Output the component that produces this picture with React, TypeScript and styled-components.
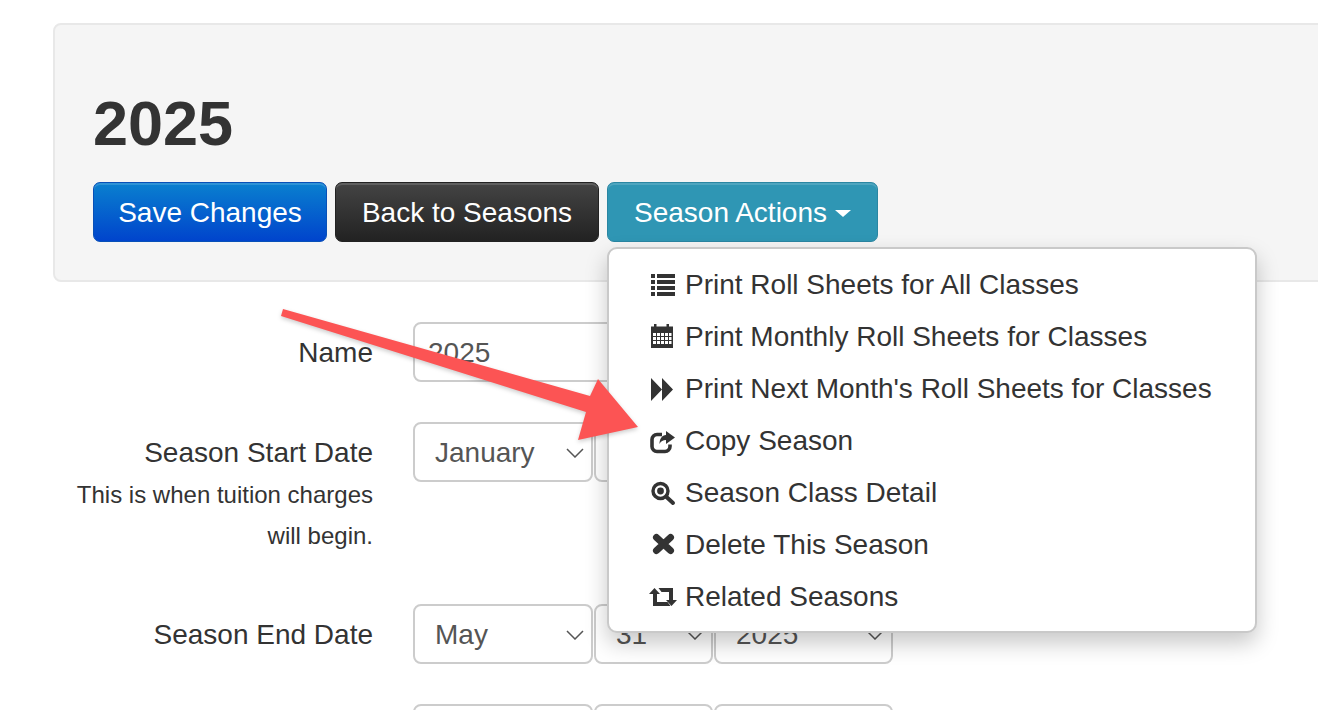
import React, { FC } from "react";
import styled, { createGlobalStyle } from "styled-components";

const GlobalStyle = createGlobalStyle`
  html, body {
    margin: 0;
    padding: 0;
    background: #fff;
    overflow: hidden;
  }
`;

const Page = styled.div`
  position: relative;
  width: 1318px;
  height: 710px;
  overflow: hidden;
  box-sizing: border-box;
  padding: 23px 0 0 53px;
  font-family: "Liberation Sans", Arial, sans-serif;
  color: #333;
`;

const HeroPanel = styled.div`
  box-sizing: border-box;
  width: 1320px;
  height: 259px;
  padding: 71px 38px 38px;
  background: #f5f5f5;
  border: 2px solid #e8e8e8;
  border-radius: 8px;
`;

const Title = styled.h1`
  margin: 0 0 32px;
  font-size: 63px;
  line-height: 54px;
  font-weight: 700;
  color: #333;
`;

const ButtonRow = styled.div`
  display: flex;
  gap: 8px;
`;

const ButtonGroup = styled.div`
  position: relative;
`;

const ActionButton = styled.button<{ $from: string; $to: string; $edge: string; $width: number }>`
  box-sizing: border-box;
  display: flex;
  align-items: center;
  justify-content: center;
  gap: 8px;
  width: ${(p) => p.$width}px;
  height: 60px;
  padding: 2px 0 0;
  font-family: inherit;
  font-size: 28px;
  color: #fff;
  background: linear-gradient(${(p) => p.$from}, ${(p) => p.$to});
  border: 1px solid ${(p) => p.$edge};
  border-radius: 7px;
  box-shadow: inset 0 2px 0 rgba(255, 255, 255, 0.15);
`;

const Caret = styled.span`
  width: 0;
  height: 0;
  border-left: 8px solid transparent;
  border-right: 8px solid transparent;
  border-top: 7px solid #fff;
`;

const Menu = styled.ul`
  position: absolute;
  z-index: 2;
  top: 65px;
  left: 0;
  box-sizing: border-box;
  width: 650px;
  height: 386px;
  margin: 0;
  padding: 10px 0 0 41px;
  list-style: none;
  background: #fff;
  border: 2px solid #c9c9c9;
  border-radius: 10px;
  box-shadow: 0 10px 22px rgba(0, 0, 0, 0.22);
`;

const MenuItem = styled.li`
  display: flex;
  align-items: center;
  height: 52px;
  font-size: 28px;
  color: #333;
  white-space: nowrap;
`;

const IconSlot = styled.svg`
  flex: none;
  width: 26px;
  height: 26px;
  margin-right: 9px;
  overflow: visible;
  color: #333;
`;

const Form = styled.div`
  display: flex;
  flex-direction: column;
  margin-top: 40px;
`;

const FormRow = styled.div<{ $height: number }>`
  display: flex;
  gap: 40px;
  height: ${(p) => p.$height}px;
`;

const LabelColumn = styled.div`
  width: 320px;
  text-align: right;
`;

const Label = styled.div`
  height: 60px;
  line-height: 62px;
  font-size: 28px;
  color: #333;
`;

const Hint = styled.div`
  margin-top: -8px;
  font-size: 24px;
  line-height: 41px;
  color: #333;
`;

const NameInput = styled.input`
  box-sizing: border-box;
  width: 480px;
  height: 60px;
  padding: 2px 13px 0;
  font-family: inherit;
  font-size: 28px;
  color: #555;
  background: #fff;
  border: 2px solid #ccc;
  border-radius: 8px;
  outline: none;
`;

const SelectRow = styled.div`
  display: flex;
  gap: 1px;
`;

const SelectBox = styled.div<{ $width: number }>`
  box-sizing: border-box;
  display: flex;
  align-items: center;
  justify-content: space-between;
  width: ${(p) => p.$width}px;
  height: 60px;
  padding: 2px 7px 0 20px;
  font-size: 28px;
  color: #555;
  background: #fff;
  border: 2px solid #ccc;
  border-radius: 8px;
`;

const Chevron = styled.svg`
  flex: none;
  width: 18px;
  height: 10px;
`;

const Arrow = styled.svg`
  position: absolute;
  z-index: 3;
  left: 0;
  top: 0;
  width: 1318px;
  height: 710px;
  pointer-events: none;
  filter: drop-shadow(0 2px 2px rgba(0, 0, 0, 0.2));
`;

const ListIcon: FC = () => (
  <IconSlot viewBox="0 0 26 26" fill="currentColor">
    <path d="M1 2h4v4H1zM7 2h18v4H7zM1 8h4v4H1zM7 8h18v4H7zM1 14h4v4H1zM7 14h18v4H7zM1 20h4v4H1zM7 20h18v4H7z" />
  </IconSlot>
);

const CalendarIcon: FC = () => (
  <IconSlot viewBox="0 0 26 26" fill="currentColor">
    <path
      fillRule="evenodd"
      d="M4 0h2.500v2.500h10V0H19v2.500h4V24H1V2.500h3zM3 9v3h3V9zM7 9v3h3V9zM11 9v3h3V9zM15 9v3h3V9zM19 9v3h2.500V9zM3 13v3h3v-3zM7 13v3h3v-3zM11 13v3h3v-3zM15 13v3h3v-3zM19 13v3h2.500v-3zM3 17v3h3v-3zM7 17v3h3v-3zM11 17v3h3v-3zM15 17v3h3v-3zM19 17v3h2.500v-3z"
    />
  </IconSlot>
);

const ForwardIcon: FC = () => (
  <IconSlot viewBox="0 0 26 26" fill="currentColor">
    <path d="M1 2l11 11.500L1 25zM12 2l11 11.500L12 25z" />
  </IconSlot>
);

const ShareIcon: FC = () => (
  <IconSlot viewBox="0 0 26 26">
    <path d="M12 6.500H7A5 5 0 0 0 2 11.500v7a5 5 0 0 0 5 5h8a5 5 0 0 0 5-5v-2" fill="none" stroke="currentColor" strokeWidth="3.600" />
    <path d="M16 3l9 6.500-9 6.500v-4c-3 0-5 1-6.500 4C9.500 11 12 7 16 7z" fill="currentColor" />
  </IconSlot>
);

const ZoomIcon: FC = () => (
  <IconSlot viewBox="0 0 26 26">
    <circle cx="10.500" cy="11" r="7.500" fill="none" stroke="currentColor" strokeWidth="3.400" />
    <circle cx="10.500" cy="11" r="3.400" fill="currentColor" />
    <path d="M16.500 17L23 23" stroke="currentColor" strokeWidth="4" strokeLinecap="round" />
  </IconSlot>
);

const RemoveIcon: FC = () => (
  <IconSlot viewBox="0 0 26 26">
    <path d="M6.500 5.500l14 13M20.500 5.500l-14 13" stroke="currentColor" strokeWidth="7" strokeLinecap="round" />
  </IconSlot>
);

const RetweetIcon: FC = () => (
  <IconSlot viewBox="0 0 26 26" fill="currentColor">
    <path d="M-1 10l5.500-6L10 10H7v8h10.500l3 4H3V10zM8.500 4H23v12h4l-5.500 6L16 16h3V8H11.500z" />
  </IconSlot>
);

const ChevronDown: FC = () => (
  <Chevron viewBox="0 0 18 10">
    <path d="M1 1l8 8 8-8" fill="none" stroke="#555" strokeWidth="1.500" />
  </Chevron>
);

const Select: FC<{ value?: string; width: number }> = ({ value, width }) => (
  <SelectBox $width={width}>
    {value}
    <ChevronDown />
  </SelectBox>
);

const menuItems = [
  { icon: <ListIcon />, label: "Print Roll Sheets for All Classes" },
  { icon: <CalendarIcon />, label: "Print Monthly Roll Sheets for Classes" },
  { icon: <ForwardIcon />, label: "Print Next Month's Roll Sheets for Classes" },
  { icon: <ShareIcon />, label: "Copy Season" },
  { icon: <ZoomIcon />, label: "Season Class Detail" },
  { icon: <RemoveIcon />, label: "Delete This Season" },
  { icon: <RetweetIcon />, label: "Related Seasons" },
];

const App: FC = () => (
  <Page>
    <GlobalStyle />
    <HeroPanel>
      <Title>2025</Title>
      <ButtonRow>
        <ActionButton $from="#0a80cf" $to="#0044cc" $edge="#0850b8" $width={234}>
          Save Changes
        </ActionButton>
        <ActionButton $from="#444444" $to="#222222" $edge="#222222" $width={264}>
          Back to Seasons
        </ActionButton>
        <ButtonGroup>
          <ActionButton $from="#2f96b4" $to="#2f96b4" $edge="#2a86a2" $width={271}>
            Season Actions
            <Caret />
          </ActionButton>
          <Menu>
            {menuItems.map((item) => (
              <MenuItem key={item.label}>
                {item.icon}
                {item.label}
              </MenuItem>
            ))}
          </Menu>
        </ButtonGroup>
      </ButtonRow>
    </HeroPanel>
    <Form>
      <FormRow $height={100}>
        <LabelColumn>
          <Label>Name</Label>
        </LabelColumn>
        <NameInput defaultValue="2025" />
      </FormRow>
      <FormRow $height={182}>
        <LabelColumn>
          <Label>Season Start Date</Label>
          <Hint>
            This is when tuition charges
            <br />
            will begin.
          </Hint>
        </LabelColumn>
        <SelectRow>
          <Select value="January" width={180} />
          <Select width={119} />
          <Select width={179} />
        </SelectRow>
      </FormRow>
      <FormRow $height={100}>
        <LabelColumn>
          <Label>Season End Date</Label>
        </LabelColumn>
        <SelectRow>
          <Select value="May" width={180} />
          <Select value="31" width={119} />
          <Select value="2025" width={179} />
        </SelectRow>
      </FormRow>
      <FormRow $height={60}>
        <LabelColumn />
        <SelectRow>
          <Select width={180} />
          <Select width={119} />
          <Select width={179} />
        </SelectRow>
      </FormRow>
    </Form>
    <Arrow viewBox="0 0 1318 710">
      <path d="M283 309L590 396L598 379L638 427L578 440L586 412L281 316z" fill="#fc5454" />
    </Arrow>
  </Page>
);

export default App;
